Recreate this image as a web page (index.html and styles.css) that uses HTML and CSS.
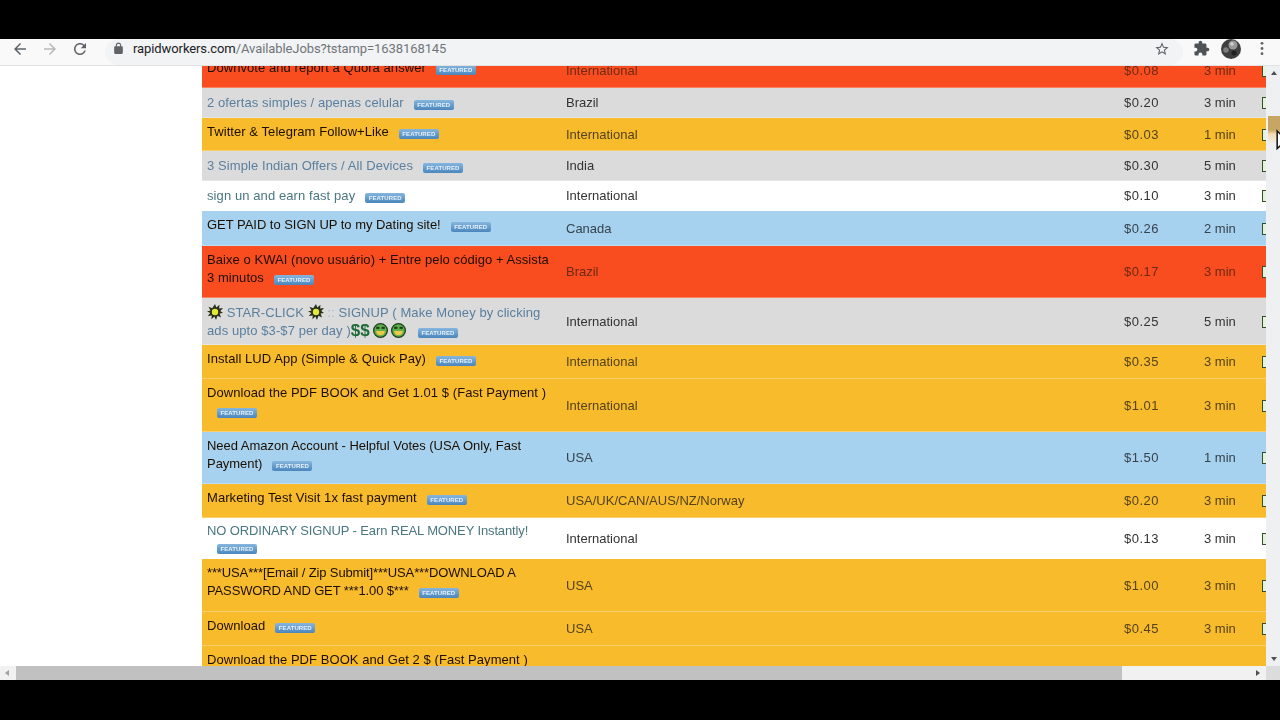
FILE: index.html
```html
<!DOCTYPE html>
<html lang="en">
<head>
    <meta charset="UTF-8">
    <title>Available Jobs</title>
    <link rel="stylesheet" href="styles.css">
</head>
<body>
    <div class="letterbox-top"></div>

    <div class="toolbar">
        <svg class="nav-icon back" viewBox="0 0 24 24"><path d="M20 11H7.83l5.59-5.59L12 4l-8 8 8 8 1.41-1.41L7.83 13H20v-2z"/></svg>
        <svg class="nav-icon forward" viewBox="0 0 24 24"><path d="M12 4l-1.41 1.41L16.17 11H4v2h12.17l-5.58 5.59L12 20l8-8z"/></svg>
        <svg class="nav-icon reload" viewBox="0 0 24 24"><path d="M17.65 6.35C16.2 4.9 14.21 4 12 4c-4.42 0-7.99 3.58-7.99 8s3.57 8 7.99 8c3.73 0 6.84-2.55 7.73-6h-2.08c-.82 2.33-3.04 4-5.65 4-3.31 0-6-2.69-6-6s2.69-6 6-6c1.66 0 3.14.69 4.22 1.78L13 11h7V4l-2.35 2.35z"/></svg>
        <div class="omnibox">
            <svg class="lock" viewBox="0 0 24 24"><path d="M18 8h-1V6c0-2.76-2.24-5-5-5S7 3.24 7 6v2H6c-1.1 0-2 .9-2 2v10c0 1.1.9 2 2 2h12c1.1 0 2-.9 2-2V10c0-1.1-.9-2-2-2zM9 6c0-1.66 1.34-3 3-3s3 1.34 3 3v2H9V6z"/></svg>
            <span class="url"><b>rapidworkers.com</b>/AvailableJobs?tstamp=1638168145</span>
            <svg class="star" viewBox="0 0 24 24"><path d="M22 9.24l-7.19-.62L12 2 9.19 8.63 2 9.24l5.46 4.73L5.82 21 12 17.27 18.18 21l-1.63-7.03L22 9.24zM12 15.4l-3.76 2.27 1-4.28-3.32-2.88 4.38-.38L12 6.1l1.71 4.04 4.38.38-3.32 2.88 1 4.28L12 15.4z"/></svg>
        </div>
        <svg class="puzzle" viewBox="0 0 24 24"><path d="M20.5 11H19V7c0-1.1-.9-2-2-2h-4V3.5C13 2.12 11.88 1 10.5 1S8 2.12 8 3.5V5H4c-1.1 0-1.99.9-1.99 2v3.8H3.5c1.49 0 2.7 1.21 2.7 2.7s-1.21 2.7-2.7 2.7H2V20c0 1.1.9 2 2 2h3.8v-1.5c0-1.49 1.21-2.7 2.7-2.7 1.49 0 2.7 1.21 2.7 2.7V22H17c1.1 0 2-.9 2-2v-4h1.5c1.38 0 2.5-1.12 2.5-2.5S21.88 11 20.5 11z"/></svg>
        <svg class="avatar" viewBox="0 0 20 20">
            <circle cx="10" cy="10" r="10" fill="#3f3f3f"/>
            <circle cx="12" cy="6" r="4.500" fill="#9a9a9a"/>
            <circle cx="5" cy="11" r="2.800" fill="#7d7d7d"/>
            <circle cx="13" cy="14" r="2.500" fill="#222"/>
            <circle cx="11" cy="5" r="1.800" fill="#d2d2d2"/>
        </svg>
        <svg class="menu-dots" viewBox="0 0 4 16"><circle cx="2" cy="2.500" r="1.500"/><circle cx="2" cy="8" r="1.500"/><circle cx="2" cy="13.500" r="1.500"/></svg>
    </div>

    <div class="viewport">
        <div class="content">
            <table class="jobs">
                <colgroup>
                    <col class="col-title"><col class="col-location"><col class="col-pay"><col class="col-time"><col class="col-action">
                </colgroup>
                <tr class="red h34">
                    <td class="title">Downvote and report a Quora answer<span class="badge">FEATURED</span></td>
                    <td>International</td><td>$0.08</td><td>3 min</td><td><span class="go"></span></td>
                </tr>
                <tr class="gray h30">
                    <td class="title">2 ofertas simples / apenas celular<span class="badge">FEATURED</span></td>
                    <td>Brazil</td><td>$0.20</td><td>3 min</td><td><span class="go"></span></td>
                </tr>
                <tr class="orange h33">
                    <td class="title">Twitter &amp; Telegram Follow+Like<span class="badge">FEATURED</span></td>
                    <td>International</td><td>$0.03</td><td>1 min</td><td><span class="go"></span></td>
                </tr>
                <tr class="gray h30">
                    <td class="title">3 Simple Indian Offers / All Devices<span class="badge">FEATURED</span></td>
                    <td>India</td><td>$0.30</td><td>5 min</td><td><span class="go"></span></td>
                </tr>
                <tr class="white h30">
                    <td class="title">sign un and earn fast pay<span class="badge">FEATURED</span></td>
                    <td>International</td><td>$0.10</td><td>3 min</td><td><span class="go"></span></td>
                </tr>
                <tr class="blue h35">
                    <td class="title">GET PAID to SIGN UP to my Dating site!<span class="badge">FEATURED</span></td>
                    <td>Canada</td><td>$0.26</td><td>2 min</td><td><span class="go"></span></td>
                </tr>
                <tr class="red h52">
                    <td class="title">Baixe o KWAI (novo usuário) + Entre pelo código + Assista 3 minutos<span class="badge">FEATURED</span></td>
                    <td>Brazil</td><td>$0.17</td><td>3 min</td><td><span class="go"></span></td>
                </tr>
                <tr class="gray h47">
                    <td class="title">
                        <svg class="burst" viewBox="0 0 16 16"><path fill="#26301a" d="M8 0l1.300 3.600L12.500 .8l-.4 3.800 3.900-.6-2.700 3 2.700 2-3.400.6 1.400 3.900-3.500-1.700L9 16l-1.600-3.500L4.400 15.300l.4-3.900-4 .6 2.500-3L0 7.400l3.500-.8L1.500 2.800l3.700 1.500z"/><circle cx="8" cy="8" r="3.200" fill="#e4e83a"/></svg>
                        STAR-CLICK
                        <svg class="burst" viewBox="0 0 16 16"><path fill="#26301a" d="M8 0l1.300 3.600L12.500 .8l-.4 3.800 3.900-.6-2.700 3 2.700 2-3.400.6 1.400 3.900-3.500-1.700L9 16l-1.600-3.500L4.400 15.300l.4-3.900-4 .6 2.500-3L0 7.400l3.500-.8L1.500 2.800l3.700 1.500z"/><circle cx="8" cy="8" r="3.200" fill="#e4e83a"/></svg>
                        <span class="dim">::</span> SIGNUP ( Make Money by clicking ads upto $3-$7 per day )<span class="dollar">$</span><span class="dollar">$</span><svg class="money-face" viewBox="0 0 14 14"><circle cx="7" cy="7" r="6.400" fill="#5fb04a" stroke="#1d3d1c" stroke-width="1.200"/><rect x="3" y="3.500" width="3" height="2" fill="#1d3d1c"/><rect x="8" y="3.500" width="3" height="2" fill="#1d3d1c"/><path d="M3 7.500h8c0 2.500-1.800 4-4 4s-4-1.500-4-4z" fill="#efc94a"/></svg><svg class="money-face" viewBox="0 0 14 14"><circle cx="7" cy="7" r="6.400" fill="#5fb04a" stroke="#1d3d1c" stroke-width="1.200"/><rect x="3" y="3.500" width="3" height="2" fill="#1d3d1c"/><rect x="8" y="3.500" width="3" height="2" fill="#1d3d1c"/><path d="M3 7.500h8c0 2.500-1.800 4-4 4s-4-1.500-4-4z" fill="#efc94a"/></svg><span class="badge">FEATURED</span>
                    </td>
                    <td>International</td><td>$0.25</td><td>5 min</td><td><span class="go"></span></td>
                </tr>
                <tr class="orange h34">
                    <td class="title">Install LUD App (Simple &amp; Quick Pay)<span class="badge">FEATURED</span></td>
                    <td>International</td><td>$0.35</td><td>3 min</td><td><span class="go"></span></td>
                </tr>
                <tr class="orange h53">
                    <td class="title">Download the PDF BOOK and Get 1.01 $ (Fast Payment )<span class="badge">FEATURED</span></td>
                    <td>International</td><td>$1.01</td><td>3 min</td><td><span class="go"></span></td>
                </tr>
                <tr class="blue h52">
                    <td class="title">Need Amazon Account - Helpful Votes (USA Only, Fast Payment)<span class="badge">FEATURED</span></td>
                    <td>USA</td><td>$1.50</td><td>1 min</td><td><span class="go"></span></td>
                </tr>
                <tr class="orange h34">
                    <td class="title">Marketing Test Visit 1x fast payment<span class="badge">FEATURED</span></td>
                    <td>USA/UK/CAN/AUS/NZ/Norway</td><td>$0.20</td><td>3 min</td><td><span class="go"></span></td>
                </tr>
                <tr class="white h41">
                    <td class="title caps">NO ORDINARY SIGNUP - Earn REAL MONEY Instantly!<span class="badge">FEATURED</span></td>
                    <td>International</td><td>$0.13</td><td>3 min</td><td><span class="go"></span></td>
                </tr>
                <tr class="orange h53">
                    <td class="title caps">***USA***[Email / Zip Submit]***USA***DOWNLOAD A PASSWORD AND GET ***1.00 $***<span class="badge">FEATURED</span></td>
                    <td>USA</td><td>$1.00</td><td>3 min</td><td><span class="go"></span></td>
                </tr>
                <tr class="orange h34">
                    <td class="title">Download<span class="badge">FEATURED</span></td>
                    <td>USA</td><td>$0.45</td><td>3 min</td><td><span class="go"></span></td>
                </tr>
                <tr class="orange h52">
                    <td class="title">Download the PDF BOOK and Get 2 $ (Fast Payment )<span class="badge">FEATURED</span></td>
                    <td>International</td><td>$1.00</td><td>3 min</td><td><span class="go"></span></td>
                </tr>
            </table>
        </div>

        <div class="v-scroll">
            <span class="arrow-up"></span>
            <div class="v-thumb"></div>
            <span class="arrow-down"></span>
            <svg class="cursor" viewBox="0 0 12 20"><path d="M1 1v15l4-3.500 2.500 6 2.500-1-2.500-6H12z" fill="#fff" stroke="#111" stroke-width="1.300"/></svg>
        </div>
    </div>

    <div class="h-scroll">
        <span class="arrow-left"></span>
        <div class="h-thumb"></div>
        <span class="arrow-right"></span>
        <div class="corner"></div>
    </div>

    <div class="letterbox-bottom"></div>
</body>
</html>
```

FILE: styles.css
```css
* {
    margin: 0;
    padding: 0;
    box-sizing: border-box;
}

html, body {
    height: 720px;
    overflow: hidden;
}

body {
    font-family: "Liberation Sans", Arial, sans-serif;
    background: #000;
    display: flex;
    flex-direction: column;
}

.letterbox-top {
    height: 39px;
    background: #000;
}

.letterbox-bottom {
    height: 40px;
    background: #000;
}

/* browser toolbar */
.toolbar {
    height: 27px;
    background: #f9f9f9;
    border-bottom: 1px solid #e2e2e2;
    display: flex;
    align-items: center;
    padding: 0 0 7px 11px;
}

.nav-icon {
    width: 18px;
    height: 18px;
    fill: #5f6368;
    margin-right: 12px;
    flex-shrink: 0;
}

.nav-icon.forward {
    fill: #b9b9b9;
}

.omnibox {
    width: 1078px;
    align-self: stretch;
    margin: 0 10px -7px 4px;
    padding: 0 0 7px 7px;
    background: #f2f3f4;
    border-radius: 14px;
    display: flex;
    align-items: center;
}

.lock {
    width: 13px;
    height: 13px;
    fill: #5f6368;
}

.url {
    font-family: Roboto, "Liberation Sans", sans-serif;
    font-size: 13px;
    letter-spacing: -0.09px;
    color: #70757a;
    margin-left: 8px;
}

.url b {
    font-weight: 400;
    color: #202124;
}

.star {
    width: 16px;
    height: 16px;
    fill: #5f6368;
    margin-left: auto;
    margin-right: 13px;
}

.puzzle {
    width: 17px;
    height: 17px;
    fill: #4f5356;
}

.avatar {
    width: 20px;
    height: 20px;
    margin-left: 11px;
}

.menu-dots {
    width: 4px;
    height: 15px;
    fill: #5f6368;
    margin-left: 19px;
}

/* page area */
.viewport {
    height: 600px;
    display: flex;
}

.content {
    flex: 1;
    background: #fff;
    overflow: hidden;
    padding-left: 202px;
}

.jobs {
    width: 1100px;
    margin-top: -12px;
    table-layout: fixed;
    border-collapse: separate;
    border-spacing: 0;
    font-size: 13px;
    filter: blur(0.3px);
}

.col-title { width: 359px; }
.col-location { width: 559px; }
.col-pay { width: 80px; }
.col-time { width: 58px; }
.col-action { width: 44px; }

.jobs td {
    padding: 1px 4px 0 5px;
    vertical-align: middle;
    line-height: 18px;
    border-bottom: 1px solid rgba(255, 255, 255, 0.3);
}

.jobs td + td + td {
    padding-left: 4px;
}

/* the pay column runs a bit wider than plain 13px */
.jobs td:nth-child(3) {
    letter-spacing: 0.5px;
}

.jobs .title {
    letter-spacing: 0.06px;
}

.jobs .gray .title,
.jobs .white .title {
    letter-spacing: 0.09px;
}

.jobs .blue .title {
    letter-spacing: -0.03px;
}

.jobs .title.caps {
    letter-spacing: -0.13px;
}

.h30 td { height: 30px; }
.h33 td { height: 33px; }
.h34 td { height: 34px; }
.h35 td { height: 35px; }
.h41 td { height: 41px; }
.h47 td { height: 47px; }
.h52 td { height: 52px; }
.h53 td { height: 53px; }

/* row colours */
.red td { background: #f94c1f; color: #6d2a14; }
.orange td { background: #f8bb2c; color: #54421c; }
.blue td { background: #a6d1ef; color: #35434c; }
.gray td { background: #dbdbdb; color: #333; }
.white td { background: #fff; color: #333; }

.red .title,
.orange .title,
.blue .title {
    color: #1c0f00;
    vertical-align: top;
    padding-top: 5px;
}

.gray .title {
    color: #5a7f9e;
}

.white .title {
    color: #4a7780;
    line-height: 16px;
}

.dim {
    color: #a9b8c4;
}

.badge {
    display: inline-block;
    width: 40px;
    height: 10px;
    line-height: 10px;
    margin-left: 10px;
    border-radius: 2px;
    background: linear-gradient(#86b6de, #4a86bd);
    color: #e8f2fa;
    font-size: 6px;
    font-weight: 700;
    text-align: center;
    letter-spacing: 0.1px;
}

.money-face + .badge {
    margin-left: 12px;
}

.burst {
    width: 16px;
    height: 16px;
    vertical-align: -3px;
}

.dollar {
    font-weight: 700;
    font-size: 17px;
    line-height: 1;
    color: #1f6a3a;
    vertical-align: -1px;
}

.dollar:first-of-type {
    margin-left: 2px;
}

.money-face {
    width: 15px;
    height: 15px;
    vertical-align: -3px;
    margin-left: 3px;
}

.go {
    display: block;
    width: 30px;
    height: 12px;
    border: 1.5px solid #33502c;
    background: #e6f3dc;
}

/* scrollbars */
.v-scroll {
    width: 14px;
    background: #eef0f1;
    position: relative;
}

.v-thumb {
    position: absolute;
    top: 50px;
    left: 2px;
    width: 12px;
    height: 28px;
    background: linear-gradient(#c6a565 0, #c6a565 14px, #f6d9b0 18px, #eef0f1 28px);
}

.arrow-up,
.arrow-down,
.arrow-left,
.arrow-right {
    position: absolute;
    width: 0;
    height: 0;
    border-style: solid;
    border-color: transparent;
}

.arrow-up {
    top: 5px;
    left: 5px;
    border-width: 0 3px 4px;
    border-bottom-color: #505050;
}

.arrow-down {
    bottom: 5px;
    left: 5px;
    border-width: 4px 3px 0;
    border-top-color: #505050;
}

.cursor {
    position: absolute;
    top: 62px;
    left: 10px;
    width: 14px;
    height: 27px;
}

.h-scroll {
    height: 14px;
    background: #f1f1f1;
    position: relative;
}

.h-thumb {
    position: absolute;
    top: 0;
    left: 16px;
    width: 1106px;
    height: 14px;
    background: #c1c1c1;
}

.arrow-left {
    top: 4px;
    left: 5px;
    border-width: 3px 4px 3px 0;
    border-right-color: #a0a0a0;
}

.arrow-right {
    top: 4px;
    left: 1256px;
    border-width: 3px 0 3px 4px;
    border-left-color: #505050;
}

.corner {
    position: absolute;
    top: 0;
    right: 0;
    width: 14px;
    height: 14px;
    background: #dcdcdc;
}
```
